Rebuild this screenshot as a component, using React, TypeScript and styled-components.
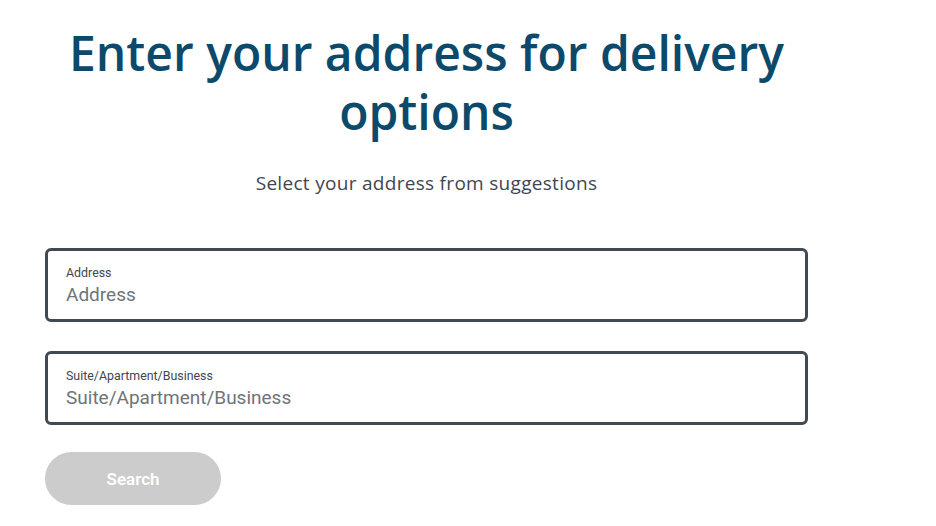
import styled, { createGlobalStyle } from "styled-components";

const GlobalStyle = createGlobalStyle`
  html, body {
    margin: 0;
    padding: 0;
    background: #ffffff;
  }
  body {
    font-family: "Open Sans", "Liberation Sans", sans-serif;
  }
`;

export default function App() {
  return (
    <>
      <GlobalStyle />
      <Page>
        <Title>Enter your address for delivery options</Title>
        <Subtitle>Select your address from suggestions</Subtitle>
        <Form>
          <Field>
            <FieldLabel>Address</FieldLabel>
            <FieldInput placeholder="Address" />
          </Field>
          <Field>
            <FieldLabel>Suite/Apartment/Business</FieldLabel>
            <FieldInput placeholder="Suite/Apartment/Business" />
          </Field>
          <SearchButton disabled>Search</SearchButton>
        </Form>
      </Page>
    </>
  );
}

const Page = styled.div`
  display: flex;
  flex-direction: column;
  align-items: center;
  width: 763px;
  margin-left: 45px;
  padding-top: 23px;
`;

const Title = styled.h1`
  margin: 0;
  width: 763px;
  font-family: "Open Sans", "Liberation Sans", sans-serif;
  font-weight: 600;
  font-size: 48px;
  line-height: 59px;
  text-align: center;
  color: #0b4a6b;
`;

const Subtitle = styled.p`
  margin: 29px 0 0;
  font-family: "Open Sans", "Liberation Sans", sans-serif;
  font-size: 19px;
  letter-spacing: 0.3px;
  color: #3f4650;
`;

const Form = styled.div`
  display: flex;
  flex-direction: column;
  align-self: stretch;
  gap: 29px;
  margin-top: 52px;
`;

const Field = styled.label`
  display: flex;
  flex-direction: column;
  justify-content: center;
  height: 74px;
  box-sizing: border-box;
  padding: 0 18px;
  border: 3px solid #414a52;
  border-radius: 6px;
`;

const FieldLabel = styled.span`
  font-family: "Roboto", "Liberation Sans", sans-serif;
  font-size: 12.4px;
  color: #3f4650;
`;

const FieldInput = styled.input`
  margin-top: 3px;
  padding: 0;
  border: none;
  outline: none;
  font-family: "Roboto", "Liberation Sans", sans-serif;
  font-size: 19px;
  color: #3f4650;
  &::placeholder {
    color: #6e747a;
  }
`;

const SearchButton = styled.button`
  width: 176px;
  height: 53px;
  margin-top: -2px;
  border: none;
  border-radius: 27px;
  background: #cccccc;
  color: #ffffff;
  font-family: "Roboto", "Liberation Sans", sans-serif;
  font-weight: 600;
  font-size: 17px;
`;
